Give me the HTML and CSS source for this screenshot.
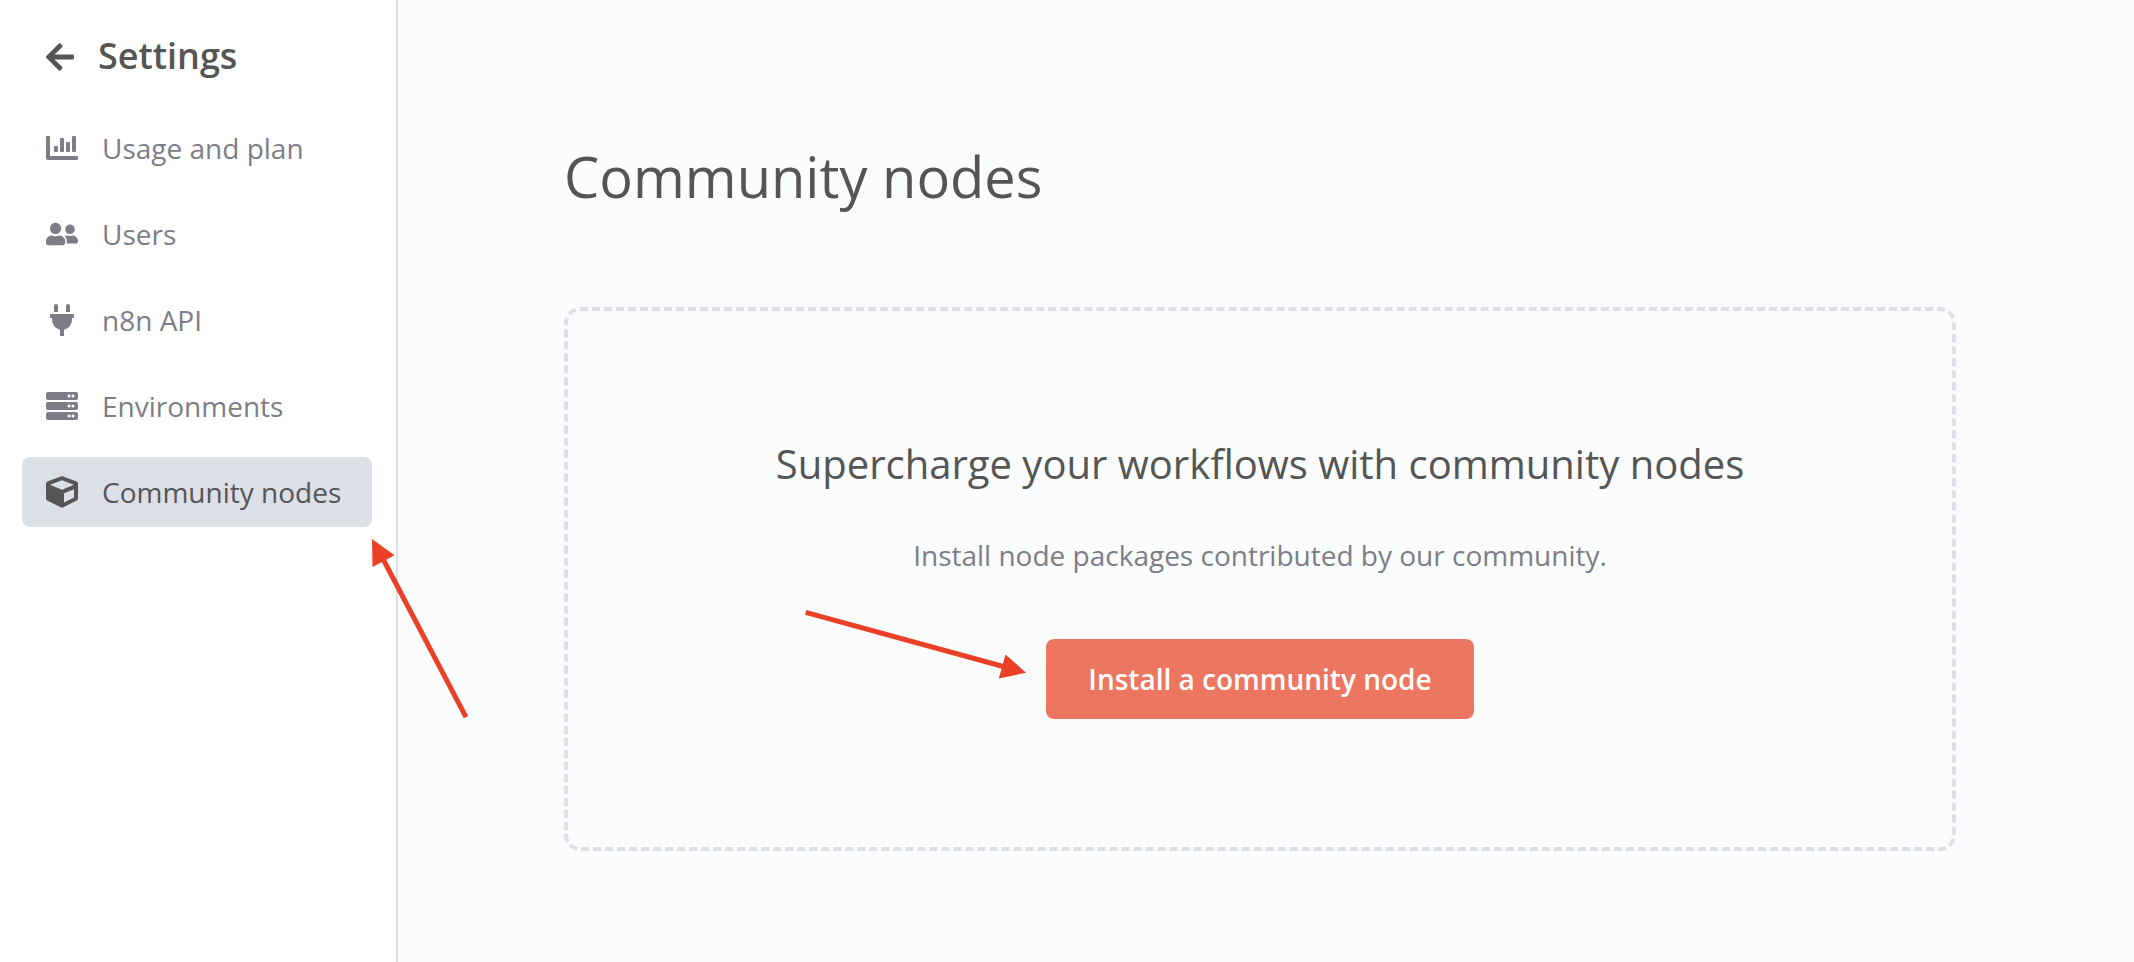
FILE: index.html
```html
<!DOCTYPE html>
<html lang="en">
<head>
<meta charset="utf-8">
<title>Settings - Community nodes</title>
<link rel="stylesheet" href="styles.css">
</head>
<body>
<div class="app">
  <aside class="sidebar">
    <div class="sidebar-header">
      <svg class="back-icon" viewBox="0 0 448 512"><path d="M257.5 445.1l-22.2 22.2c-9.4 9.4-24.6 9.4-33.9 0L7 273c-9.4-9.4-9.4-24.6 0-33.9L201.4 44.7c9.4-9.4 24.6-9.4 33.9 0l22.2 22.2c9.5 9.5 9.3 25-.4 34.3L136.6 216H424c13.3 0 24 10.7 24 24v32c0 13.3-10.7 24-24 24H136.6l120.5 114.8c9.8 9.3 10 24.8.4 34.3z"/></svg>
      <span class="sidebar-title">Settings</span>
    </div>
    <nav class="menu">
      <a class="menu-item">
        <svg class="icon" viewBox="0 0 32 32"><path d="M1 4h2a1 1 0 0 1 1 1v19h27a1 1 0 0 1 1 1v2a1 1 0 0 1-1 1H2a2 2 0 0 1-2-2V5a1 1 0 0 1 1-1z"/><rect x="8" y="14" width="4" height="6" rx="1"/><rect x="14" y="6" width="4" height="14" rx="1"/><rect x="20" y="10" width="4" height="10" rx="1"/><rect x="26" y="4" width="4" height="16" rx="1"/></svg>
        <span>Usage and plan</span>
      </a>
      <a class="menu-item">
        <svg class="icon" viewBox="0 0 640 512"><path d="M192 256c61.9 0 112-50.1 112-112S253.9 32 192 32 80 82.1 80 144s50.1 112 112 112zm76.8 32h-8.3c-20.8 10-43.9 16-68.5 16s-47.6-6-68.5-16h-8.3C51.6 288 0 339.6 0 403.2V432c0 26.5 21.5 48 48 48h288c26.5 0 48-21.5 48-48v-28.8c0-63.6-51.6-115.2-115.2-115.2zM480 256c53 0 96-43 96-96s-43-96-96-96-96 43-96 96 43 96 96 96zm48 32h-3.8c-13.9 4.8-28.6 8-44.2 8s-30.3-3.2-44.2-8H432c-20.4 0-39.2 5.9-55.7 15.4 24.4 26.3 39.7 61.2 39.7 99.2v38.4c0 2.2-.5 4.3-.6 6.4H592c26.5 0 48-21.5 48-48 0-61.9-50.1-112-112-112z"/></svg>
        <span>Users</span>
      </a>
      <a class="menu-item">
        <svg class="icon" viewBox="0 0 384 512"><path d="M320 32a32 32 0 0 0-64 0v96h64zm48 128H16a16 16 0 0 0-16 16v32a16 16 0 0 0 16 16h16v32a160.070 160.070 0 0 0 128 156.800V512h64v-99.200A160.070 160.070 0 0 0 352 256v-32h16a16 16 0 0 0 16-16v-32a16 16 0 0 0-16-16zM128 32a32 32 0 0 0-64 0v96h64z"/></svg>
        <span>n8n API</span>
      </a>
      <a class="menu-item">
        <svg class="icon" viewBox="0 0 512 512"><path fill-rule="evenodd" d="M32 32h448a32 32 0 0 1 32 32v64a32 32 0 0 1-32 32H32a32 32 0 0 1-32-32V64a32 32 0 0 1 32-32zm336 40a24 24 0 1 0 0 48 24 24 0 0 0 0-48zm64 0a24 24 0 1 0 0 48 24 24 0 0 0 0-48zM32 192h448a32 32 0 0 1 32 32v64a32 32 0 0 1-32 32H32a32 32 0 0 1-32-32v-64a32 32 0 0 1 32-32zm336 40a24 24 0 1 0 0 48 24 24 0 0 0 0-48zm64 0a24 24 0 1 0 0 48 24 24 0 0 0 0-48zM32 352h448a32 32 0 0 1 32 32v64a32 32 0 0 1-32 32H32a32 32 0 0 1-32-32v-64a32 32 0 0 1 32-32zm336 40a24 24 0 1 0 0 48 24 24 0 0 0 0-48zm64 0a24 24 0 1 0 0 48 24 24 0 0 0 0-48z"/></svg>
        <span>Environments</span>
      </a>
      <a class="menu-item active">
        <svg class="icon" viewBox="0 0 512 512"><path d="M239.1 6.3l-208 78c-18.7 7-31.1 25-31.1 45v225.1c0 18.2 10.3 34.8 26.5 42.9l208 104c13.5 6.8 29.4 6.8 42.9 0l208-104c16.3-8.1 26.5-24.8 26.5-42.9V129.3c0-20-12.4-37.9-31.1-44.9l-208-78C262 2.2 250 2.2 239.1 6.3zM256 68.4l192 72v1.1l-192 78-192-78v-1.1l192-72zm32 356V275.5l160-65v133.9l-160 80z"/></svg>
        <span>Community nodes</span>
      </a>
    </nav>
  </aside>
  <main class="content">
    <h1 class="page-title">Community nodes</h1>
    <section class="empty-box">
      <h2 class="empty-title">Supercharge your workflows with community nodes</h2>
      <p class="empty-text">Install node packages contributed by our community.</p>
      <button class="install-button" type="button">Install a community node</button>
    </section>
  </main>
  <svg class="annotations" viewBox="0 0 2134 962">
    <path class="shaft" d="M466 717.200L382.500 558"/>
    <path class="head" d="M372 539l22.500 16.200L372.500 567z"/>
    <path class="shaft" d="M805.700 612.400L1005 667"/>
    <path class="head" d="M1026 672.700L1005.500 654.500 998.800 678.500z"/>
  </svg>
</div>
</body>
</html>
```
FILE: styles.css
```css
* {
  box-sizing: border-box;
}

body {
  margin: 0;
  font-family: "Open Sans", sans-serif;
  color: #555555;
  background: #fbfcfe;
}

.app {
  position: relative;
  display: flex;
  width: 2134px;
  height: 962px;
  overflow: hidden;
}

.sidebar {
  width: 398px;
  flex: none;
  padding: 31px 24px 0 22px;
  background: #ffffff;
  border-right: 2px solid #dcdfe6;
}

.sidebar-header {
  display: flex;
  align-items: center;
  height: 50px;
  padding-left: 24px;
  gap: 24px;
}

.back-icon {
  width: 28px;
  height: 32px;
  margin-top: 2px;
  fill: #555555;
}

.sidebar-title {
  font-size: 36px;
  line-height: 48px;
  font-weight: 600;
}

.menu {
  display: flex;
  flex-direction: column;
  gap: 16px;
  margin-top: 32px;
}

.menu-item {
  display: flex;
  align-items: center;
  gap: 24px;
  height: 70px;
  padding: 0 24px;
  border-radius: 8px;
  font-size: 28px;
  line-height: 70px;
  white-space: nowrap;
  color: #7d7d87;
}

.menu-item.active {
  color: #555555;
  background: #dcdfe6;
}

.icon {
  width: 32px;
  height: 32px;
  flex: none;
  fill: currentColor;
}

.content {
  flex: 1;
  padding: 140px 178px 0 166px;
}

.page-title {
  margin: 0;
  font-size: 56px;
  line-height: 73px;
  font-weight: 400;
}

.empty-box {
  display: flex;
  flex-direction: column;
  align-items: center;
  height: 544px;
  margin-top: 94px;
  padding-top: 128px;
  border: 4px dashed #dcdfe6;
  border-radius: 16px;
}

.empty-title {
  margin: 0;
  font-size: 40px;
  line-height: 50px;
  font-weight: 400;
}

.empty-text {
  margin: 48px 0 0;
  font-size: 28px;
  line-height: 36px;
  color: #7d7d87;
}

.install-button {
  width: 428px;
  height: 80px;
  margin-top: 66px;
  padding: 0;
  border: 0;
  border-radius: 8px;
  font: 600 28px/80px "Open Sans", sans-serif;
  color: #ffffff;
  background: #ed7660;
}

.annotations {
  position: absolute;
  inset: 0;
  width: 2134px;
  height: 962px;
  pointer-events: none;
}

.shaft {
  fill: none;
  stroke: #ea4025;
  stroke-width: 5;
}

.head {
  fill: #ea4025;
}
```
